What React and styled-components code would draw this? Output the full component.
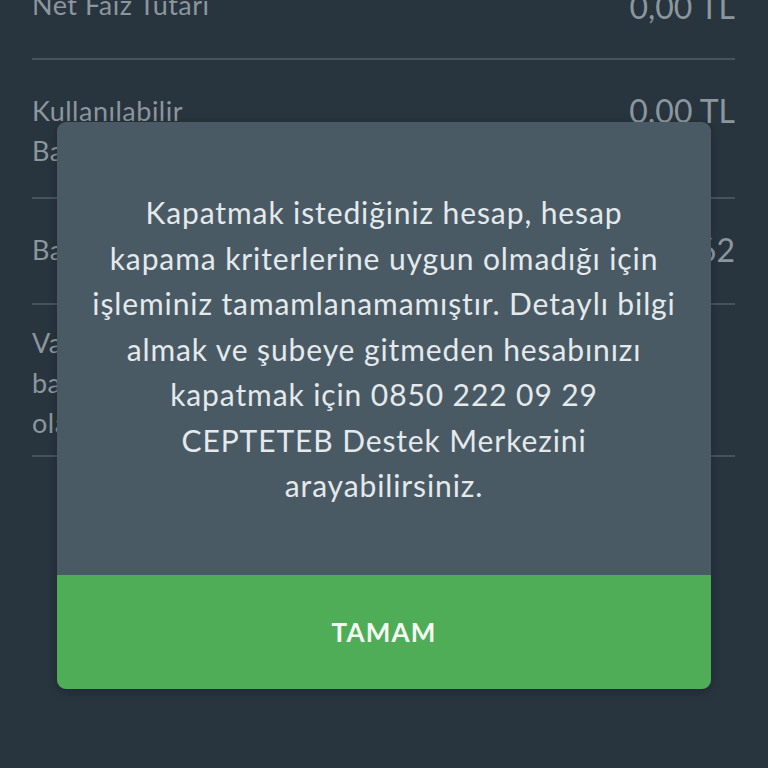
import React from 'react';
import styled, { createGlobalStyle } from 'styled-components';

const GlobalStyle = createGlobalStyle`
  html, body {
    margin: 0;
    padding: 0;
    background: #28343e;
  }
  body {
    font-family: Lato, "Noto Sans", sans-serif;
  }
`;

const Screen = styled.div`
  position: relative;
  width: 768px;
  height: 768px;
  overflow: hidden;
  background: #28343e;
`;

const List = styled.div`
  margin-top: -38px;
  padding: 0 33px 0 32px;
`;

const Row = styled.div`
  display: flex;
  justify-content: space-between;
  align-items: flex-start;
  padding: ${p => p.pt}px 0 ${p => p.pb}px;
  border-bottom: 2px solid #46535d;
`;

const Label = styled.div`
  color: #8c969d;
  font-size: 27px;
  line-height: 40px;
  letter-spacing: 0.5px;
`;

const Amount = styled.div`
  color: #8c969d;
  font-size: 32px;
  line-height: 40px;
  text-align: right;
  margin-top: ${p => p.shift || 0}px;
`;

const Overlay = styled.div`
  position: absolute;
  inset: 0;
  display: flex;
  justify-content: center;
  padding-top: 122px;
  box-sizing: border-box;
`;

const Dialog = styled.div`
  width: 654px;
  height: 567px;
  border-radius: 9px;
  overflow: hidden;
  background: #495a65;
  display: flex;
  flex-direction: column;
  box-shadow: 0 2px 8px rgba(0, 0, 0, 0.25);
`;

const Message = styled.div`
  flex: 1;
  display: flex;
  flex-direction: column;
  align-items: center;
  justify-content: center;
  padding-top: 2px;
  color: #e4e9ec;
  font-size: 30px;
  line-height: 45.5px;
  letter-spacing: 0.9px;
  text-align: center;
`;

const Line = styled.span`
  display: block;
  white-space: nowrap;
`;

const OkButton = styled.button`
  height: 114px;
  flex: none;
  border: 0;
  background: #4fac57;
  color: #f4fbf3;
  font-family: Lato, "Noto Sans", sans-serif;
  font-weight: 700;
  font-size: 26px;
  letter-spacing: 1.2px;
  cursor: pointer;
`;

const rows = [
  { label: ['Net Faiz Tutarı'], amount: '0,00 TL', pt: 23, pb: 31, shift: 2 },
  { label: ['Kullanılabilir', 'Bakiye'], amount: '0.00 TL', pt: 31, pb: 26, shift: 0 },
  { label: ['Bakiye'], amount: '1.245,62', pt: 31, pb: 33, shift: 0 },
  { label: ['Vadesiz hesap', 'bakiyesi kapatma', 'olarak'], amount: '', pt: 18, pb: 12 },
];

const message = [
  'Kapatmak istediğiniz hesap, hesap',
  'kapama kriterlerine uygun olmadığı için',
  'işleminiz tamamlanamamıştır. Detaylı bilgi',
  'almak ve şubeye gitmeden hesabınızı',
  'kapatmak için 0850 222 09 29',
  'CEPTETEB Destek Merkezini',
  'arayabilirsiniz.',
];

export default function App() {
  return (
    <Screen>
      <GlobalStyle />
      <List>
        {rows.map((r, i) => (
          <Row key={i} pt={r.pt} pb={r.pb}>
            <Label>
              {r.label.map((l, j) => (
                <div key={j}>{l}</div>
              ))}
            </Label>
            <Amount shift={r.shift}>{r.amount}</Amount>
          </Row>
        ))}
      </List>
      <Overlay>
        <Dialog>
          <Message>
            {message.map((m, i) => (
              <Line key={i}>{m}</Line>
            ))}
          </Message>
          <OkButton>TAMAM</OkButton>
        </Dialog>
      </Overlay>
    </Screen>
  );
}
